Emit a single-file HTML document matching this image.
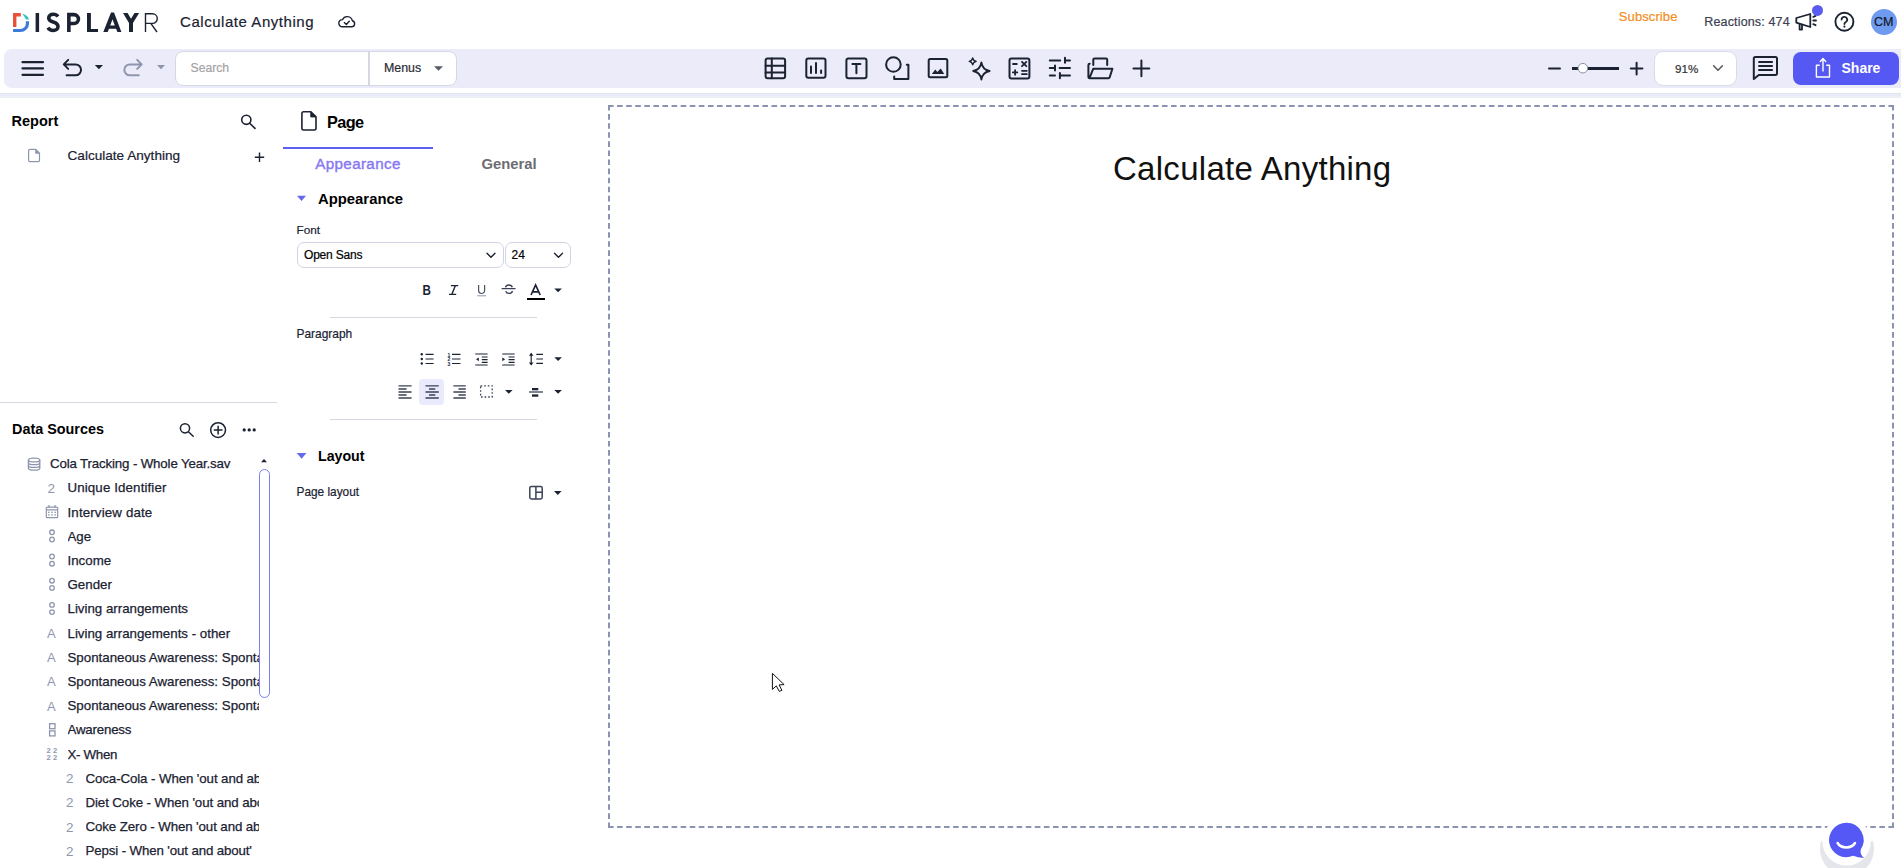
<!DOCTYPE html>
<html><head><meta charset="utf-8">
<style>
*{box-sizing:border-box;margin:0;padding:0}
html,body{width:1901px;height:868px;overflow:hidden;background:#fff;font-family:"Liberation Sans",sans-serif;color:#1b2232;position:relative}
.t{position:absolute;white-space:nowrap;line-height:1}
.b{position:absolute}
.ds{font-size:13.3px;color:#1b2232;overflow:hidden;height:16px;-webkit-text-stroke:0.25px #1b2232}
svg.ov{position:absolute;left:0;top:0;width:1901px;height:868px;overflow:visible;font-family:"Liberation Sans",sans-serif}
</style></head><body>
<div class="b" style="left:4px;top:49px;width:1897px;height:39px;background:#ebebfa;border-radius:8px 0 0 8px"></div>
<div class="b" style="left:0px;top:93px;width:1901px;height:1px;background:#e3e4eb"></div>
<div class="b" style="left:0px;top:94px;width:1901px;height:2px;background:#e9eafa"></div>
<div class="b" style="left:0px;top:96px;width:1901px;height:2px;background:#eceff3"></div>
<div class="b" style="left:175px;top:51px;width:282px;height:35px;background:#fff;border:1px solid #d5d8e3;border-radius:8px"></div>
<div class="b" style="left:368px;top:52px;width:2px;height:33px;background:#d5d8e3"></div>
<div class="b" style="left:1654px;top:51px;width:83px;height:35px;background:#fff;border:1px solid #d9dce6;border-radius:9px"></div>
<div class="b" style="left:1793px;top:52px;width:106px;height:33px;background:#5558f2;border-radius:8px"></div>
<div class="b" style="left:1870.5px;top:8.5px;width:26.5px;height:26.5px;background:#6e9af0;border-radius:50%"></div>
<div class="b" style="left:0px;top:402px;width:277px;height:1px;background:#d5d8e0"></div>
<div class="b" style="left:283px;top:147px;width:150px;height:2px;background:#5b5fef"></div>
<div class="b" style="left:297px;top:242px;width:207px;height:26px;border:1px solid #d0d4e4;border-radius:7px"></div>
<div class="b" style="left:505px;top:242px;width:66px;height:26px;border:1px solid #d0d4e4;border-radius:7px"></div>
<div class="b" style="left:330px;top:317px;width:207px;height:1px;background:#d5d8e0"></div>
<div class="b" style="left:419px;top:379px;width:25px;height:26px;background:#e9eafc;border-radius:4px"></div>
<div class="b" style="left:330px;top:419px;width:207px;height:1px;background:#d5d8e0"></div>
<div class="b" style="left:259px;top:469px;width:11px;height:229px;border:1px solid #7b7ff0;border-radius:6px"></div>
<div class="t" style="left:180px;top:14.10px;font-size:15px;color:#1b2232;-webkit-text-stroke:0.2px #1b2232;letter-spacing:0.55px;">Calculate Anything</div>
<div class="t" style="left:1618.8px;top:9.90px;font-size:13px;color:#f58d1d;-webkit-text-stroke:0.2px #f58d1d;letter-spacing:0.1px;">Subscribe</div>
<div class="t" style="left:1704.3px;top:16.32px;font-size:12.5px;color:#3b4150;-webkit-text-stroke:0.2px #3b4150;letter-spacing:0.15px;">Reactions: 474</div>
<div class="t" style="left:1874px;top:16.42px;font-size:12.5px;color:#141826;-webkit-text-stroke:0.2px #141826;">CM</div>
<div class="t" style="left:190.5px;top:62.37px;font-size:12.2px;color:#a3a3a6;-webkit-text-stroke:0.2px #a3a3a6;">Search</div>
<div class="t" style="left:384px;top:62.20px;font-size:12.4px;color:#2a2d35;-webkit-text-stroke:0.2px #2a2d35;">Menus</div>
<div class="t" style="left:1675px;top:63.18px;font-size:11.6px;color:#333;-webkit-text-stroke:0.2px #333;">91%</div>
<div class="t" style="left:1841.5px;top:60.65px;font-size:14px;color:#fff;font-weight:700;">Share</div>
<div class="t" style="left:11.5px;top:113.73px;font-size:14.5px;color:#000;font-weight:700;">Report</div>
<div class="t" style="left:67.5px;top:149.49px;font-size:13.6px;color:#1b2232;-webkit-text-stroke:0.2px #1b2232;">Calculate Anything</div>
<div class="t" style="left:12px;top:421.71px;font-size:14.4px;color:#000;font-weight:700;">Data Sources</div>
<div class="t" style="left:327px;top:113.60px;font-size:16.3px;color:#000;font-weight:700;letter-spacing:-0.6px;">Page</div>
<div class="t" style="left:315.3px;top:156.33px;font-size:15.2px;color:#8679f0;-webkit-text-stroke:0.4px #8679f0;letter-spacing:0.35px;">Appearance</div>
<div class="t" style="left:481.5px;top:156.67px;font-size:14.8px;color:#6c6d73;font-weight:700;">General</div>
<div class="t" style="left:318px;top:191.63px;font-size:14.85px;color:#000;font-weight:700;">Appearance</div>
<div class="t" style="left:296.5px;top:224.81px;font-size:11.8px;color:#1b2232;-webkit-text-stroke:0.2px #1b2232;">Font</div>
<div class="t" style="left:304px;top:249.44px;font-size:12px;color:#000;-webkit-text-stroke:0.2px #000;letter-spacing:-0.2px;">Open Sans</div>
<div class="t" style="left:511.5px;top:249.44px;font-size:12px;color:#000;-webkit-text-stroke:0.2px #000;">24</div>
<div class="t" style="left:296.5px;top:329.08px;font-size:11.95px;color:#1b2232;-webkit-text-stroke:0.2px #1b2232;">Paragraph</div>
<div class="t" style="left:318px;top:448.98px;font-size:14.2px;color:#000;font-weight:700;">Layout</div>
<div class="t" style="left:296.5px;top:487.37px;font-size:11.85px;color:#1b2232;-webkit-text-stroke:0.2px #1b2232;">Page layout</div>
<div class="t" style="left:1113px;top:152.07px;font-size:33px;color:#111;letter-spacing:0.28px;">Calculate Anything</div>
<div class="t ds" style="left:50px;top:457.24px;width:209px;letter-spacing:-0.15px">Cola Tracking - Whole Year.sav</div>
<div class="t ds" style="left:67.5px;top:481.44px;width:191.5px;letter-spacing:0.13px">Unique Identifier</div>
<div class="t ds" style="left:67.5px;top:505.64px;width:191.5px;letter-spacing:0.15px">Interview date</div>
<div class="t ds" style="left:67.5px;top:529.84px;width:191.5px;letter-spacing:0px">Age</div>
<div class="t ds" style="left:67.5px;top:554.04px;width:191.5px;letter-spacing:0px">Income</div>
<div class="t ds" style="left:67.5px;top:578.24px;width:191.5px;letter-spacing:0px">Gender</div>
<div class="t ds" style="left:67.5px;top:602.44px;width:191.5px;letter-spacing:0px">Living arrangements</div>
<div class="t ds" style="left:67.5px;top:626.64px;width:191.5px;letter-spacing:0px">Living arrangements - other</div>
<div class="t ds" style="left:67.5px;top:650.84px;width:191.5px;letter-spacing:0px">Spontaneous Awareness: Spontaneous Awareness - 1</div>
<div class="t ds" style="left:67.5px;top:675.04px;width:191.5px;letter-spacing:0px">Spontaneous Awareness: Spontaneous Awareness - 2</div>
<div class="t ds" style="left:67.5px;top:699.24px;width:191.5px;letter-spacing:0px">Spontaneous Awareness: Spontaneous Awareness - 3</div>
<div class="t ds" style="left:67.5px;top:723.44px;width:191.5px;letter-spacing:-0.2px">Awareness</div>
<div class="t ds" style="left:67.5px;top:747.64px;width:191.5px;letter-spacing:-0.3px">X- When</div>
<div class="t ds" style="left:85.5px;top:771.84px;width:173.5px;letter-spacing:-0.1px">Coca-Cola - When 'out and about'</div>
<div class="t ds" style="left:85.5px;top:796.04px;width:173.5px;letter-spacing:-0.1px">Diet Coke - When 'out and about'</div>
<div class="t ds" style="left:85.5px;top:820.24px;width:173.5px;letter-spacing:-0.1px">Coke Zero - When 'out and about'</div>
<div class="t ds" style="left:85.5px;top:844.44px;width:173.5px;letter-spacing:-0.13px">Pepsi - When 'out and about'</div>
<svg class="ov" width="1901" height="868" viewBox="0 0 1901 868">
<g fill="none" stroke="#8e96ad" stroke-width="1.3"><ellipse cx="34.1" cy="460.0" rx="5.7" ry="1.9"/><path d="M28.4 460.0 V468.20000000000005 A5.7 1.9 0 0 0 39.8 468.20000000000005 V460.0 M28.4 462.8 A5.7 1.9 0 0 0 39.8 462.8 M28.4 465.5 A5.7 1.9 0 0 0 39.8 465.5"/></g>
<text x="47.5" y="492.7" font-size="13.5" fill="#8e96ad">2</text>
<g fill="none" stroke="#8e96ad" stroke-width="1.2"><rect x="46.3" y="507.09999999999997" width="11.4" height="10.6" rx="1"/><path d="M46.3 509.9 H57.7 M49 505.09999999999997 V507.7 M55 505.09999999999997 V507.7"/></g><g fill="#8e96ad"><rect x="48" y="511.7" width="1.6" height="1.2"/><rect x="51.2" y="511.7" width="1.6" height="1.2"/><rect x="54.4" y="511.7" width="1.6" height="1.2"/><rect x="48" y="514.3" width="1.6" height="1.2"/><rect x="51.2" y="514.3" width="1.6" height="1.2"/><rect x="54.4" y="514.3" width="1.6" height="1.2"/></g>
<circle cx="52" cy="532.3000000000001" r="2.3" fill="none" stroke="#8e96ad" stroke-width="1.3"/>
<circle cx="52" cy="539.5" r="2.3" fill="none" stroke="#8e96ad" stroke-width="1.3"/>
<circle cx="52" cy="556.5" r="2.3" fill="none" stroke="#8e96ad" stroke-width="1.3"/>
<circle cx="52" cy="563.6999999999999" r="2.3" fill="none" stroke="#8e96ad" stroke-width="1.3"/>
<circle cx="52" cy="580.7" r="2.3" fill="none" stroke="#8e96ad" stroke-width="1.3"/>
<circle cx="52" cy="587.9" r="2.3" fill="none" stroke="#8e96ad" stroke-width="1.3"/>
<circle cx="52" cy="604.9000000000001" r="2.3" fill="none" stroke="#8e96ad" stroke-width="1.3"/>
<circle cx="52" cy="612.1" r="2.3" fill="none" stroke="#8e96ad" stroke-width="1.3"/>
<text x="47" y="637.9" font-size="13" fill="#8e96ad">A</text>
<text x="47" y="662.1" font-size="13" fill="#8e96ad">A</text>
<text x="47" y="686.3" font-size="13" fill="#8e96ad">A</text>
<text x="47" y="710.5" font-size="13" fill="#8e96ad">A</text>
<g fill="none" stroke="#8e96ad" stroke-width="1.3"><rect x="49.6" y="723.7" width="5.4" height="5"/><rect x="49.6" y="730.9000000000001" width="5.4" height="5"/></g>
<g font-size="7.6" font-weight="700" fill="#8e96ad"><text x="46.6" y="753.1">2</text><text x="52.9" y="753.1">2</text><text x="46.6" y="760.1">2</text><text x="52.9" y="760.1">2</text></g>
<text x="66.0" y="783.0999999999999" font-size="13.5" fill="#8e96ad">2</text>
<text x="66.0" y="807.3" font-size="13.5" fill="#8e96ad">2</text>
<text x="66.0" y="831.5" font-size="13.5" fill="#8e96ad">2</text>
<text x="66.0" y="855.7" font-size="13.5" fill="#8e96ad">2</text>
<path d="M13.05 13.05 H20.8 V16.6 H16.4 V26.9 H13.05 Z" fill="#e8503a"/>
<path d="M22.1 13.6 Q27.6 15 29.1 19.5 H25.9 Q24.6 16.6 22.1 13.6 Z" fill="#3ec1c1"/>
<g stroke="#8a94b0" stroke-width="2" fill="none"><path d="M608 106 H1894" stroke-dasharray="5.6 3.481"/><path d="M608 827 H1894" stroke-dasharray="5.6 3.481"/><path d="M609 105 V828" stroke-dasharray="5.6 3.481"/><path d="M1893 105 V828" stroke-dasharray="5.6 3.481"/></g>
<path d="M27.45 21.3 V23.5 A7 7 0 0 1 20.45 30.5 H13.05" fill="none" stroke="#3d7bd9" stroke-width="3.2"/>
<g fill="#1b2232"><rect x="35.6" y="13" width="3.5" height="19"/><path d="M87 13 H90.9 V29 H98 V32 H87 Z"/><path fill-rule="evenodd" d="M103.3 32 L111 12.6 H114 L121.4 32 H117.4 L116.1 28.8 H109 L107.6 32 Z M110.2 25.4 H114.8 L112.5 19.3 Z"/><path d="M123 13 H127.6 L131 18.8 L134.5 13 H139.1 L133 22.9 V32 H129 V22.9 Z"/></g>
<g fill="none" stroke="#1b2232" stroke-width="3.6"><path d="M58 16.5 C56.6 14.6 54.6 14.3 53.2 14.3 C50.5 14.3 48.7 15.8 48.7 18 C48.7 20.3 50.6 21.2 53.2 22 C56.2 22.9 58 24 58 26.5 C58 29 56 30.5 53.2 30.5 C50.9 30.5 49.1 29.6 48 27.6"/><path d="M68.85 32 V14.6 H74 A4.45 4.45 0 0 1 74 23.5 H68.85"/></g>
<path d="M145.5 32 V13.8 H152.5 A4.8 4.8 0 0 1 152.5 23.4 H145.5 M150.8 23.4 L157 32" fill="none" stroke="#1b2232" stroke-width="1.4"/>
<g fill="none" stroke="#1b2232" stroke-width="1.4" stroke-linejoin="round" stroke-linecap="round"><path d="M342.3 26.8 H351.6 A3.1 3.1 0 0 0 352.3 20.7 A5.2 5.2 0 0 0 342.5 19.6 A3.6 3.6 0 0 0 342.3 26.8 Z"/><path d="M344.3 22.6 L346.3 24.4 L349.3 21.2"/></g>
<g fill="none" stroke="#1b2232" stroke-width="1.8" stroke-linejoin="round" stroke-linecap="round"><path d="M1796.3 18 L1810.3 14 V27 L1796.3 22.6 Z"/><path d="M1799.6 23.8 V29.6 H1802 V24.6"/><path d="M1813.3 16.8 L1815.6 15.8 M1813.3 20.5 H1816 M1813.3 24.2 L1815.6 25.2"/></g>
<circle cx="1817.5" cy="10.4" r="5.5" fill="#5a5cf0"/>
<circle cx="1844.4" cy="21.8" r="9" fill="none" stroke="#1b2232" stroke-width="1.9"/><path d="M1841.6 19.6 A2.8 2.8 0 1 1 1845.6 22.2 Q1844.4 22.8 1844.4 24" fill="none" stroke="#1b2232" stroke-width="1.8" stroke-linecap="round"/><circle cx="1844.4" cy="26.6" r="1.1" fill="#1b2232"/>
<g stroke="#1b2232" stroke-width="2.2" stroke-linecap="round"><path d="M22.5 62.2 H43 M22.5 68.4 H43 M22.5 74.8 H43"/></g>
<path d="M68.2 59.9 L63.8 64.4 L68.2 68.9 M63.8 64.4 H75.6 A5.45 5.45 0 0 1 75.6 75.3 H66.6" fill="none" stroke="#1b2232" stroke-width="2" stroke-linecap="round" stroke-linejoin="round"/>
<path d="M94.8 65 H103 L98.9 69.3 Z" fill="#1b2232"/>
<path d="M137.2 59.9 L141.6 64.4 L137.2 68.9 M141.6 64.4 H129.8 A5.45 5.45 0 0 0 129.8 75.3 H138.8" fill="none" stroke="#8e96ad" stroke-width="2" stroke-linecap="round" stroke-linejoin="round"/>
<path d="M157 65 H165 L161 69.3 Z" fill="#8e96ad"/>
<path d="M434 66.2 H443 L438.5 70.7 Z" fill="#555a66"/>
<g fill="none" stroke="#1b2232" stroke-width="2" stroke-linecap="round" stroke-linejoin="round"><rect x="765.6" y="58.6" width="19.5" height="19.6" rx="2"/><path d="M771.8 58.6 V78.2 M765.6 65.8 H785.1 M765.6 72.4 H785.1"/><rect x="806.3" y="58.6" width="19.2" height="19.1" rx="2"/><path d="M811 66.6 V73 M816 63 V73 M821.1 70.4 V73"/><rect x="846.4" y="58.6" width="20.1" height="19.6" rx="2"/><path d="M852.4 64.1 H860.4 M856.4 64.1 V73.2"/><circle cx="893.4" cy="64.5" r="7.3"/><path d="M894.2 76.6 V79 H908.4 V64.8 H906.8"/><rect x="928.7" y="59" width="18.6" height="18.2" rx="1.5"/><rect x="1009.5" y="58.6" width="19.9" height="19.9" rx="2"/><path d="M1049.8 60.4 H1060.2 M1065 60.4 H1070 M1065 57.8 V62.8 M1049.8 68 H1055 M1055 65.6 V70.4 M1059.6 68 H1070 M1049.8 75.6 H1055 M1059.9 72.9 V78.2 M1059.9 75.6 H1070"/><path d="M1093.3 65 V59.5 Q1093.3 58.4 1094.5 58.4 H1106 Q1107.2 58.4 1107.2 59.5 V65"/><path d="M1089.7 63.8 Q1088.4 63.8 1088.4 65 V77 Q1088.4 78.3 1089.7 78.3 H1108.5 Q1109.4 78.3 1109.7 77.3 L1112.4 68.8 H1093.2 L1089.5 78"/><path d="M1133.5 68.4 H1149.3 M1141.4 60.5 V76.3"/></g>
<path d="M931.9 73.9 L935.2 69.6 L937.4 72 L940.7 68.6 L944.2 73.9 Z" fill="#1b2232"/>
<path d="M981.4 62.5 Q982.6 69.8 989.6 71 Q982.6 72.2 981.4 79.5 Q980.2 72.2 973.2 71 Q980.2 69.8 981.4 62.5 Z" fill="none" stroke="#1b2232" stroke-width="1.8" stroke-linejoin="round"/>
<path d="M972.7 58 Q973.3 60.8 976.2 61.4 Q973.3 62 972.7 64.9 Q972.1 62 969.2 61.4 Q972.1 60.8 972.7 58 Z" fill="none" stroke="#1b2232" stroke-width="1.3" stroke-linejoin="round"/>
<g stroke="#1b2232" stroke-width="1.8" stroke-linecap="round"><path d="M1013 64 H1016.8 M1022 61.9 L1026.3 66.2 M1026.3 61.9 L1022 66.2 M1012.9 72.4 H1017.3 M1015.1 70.2 V74.8 M1022 70.8 H1026.8 M1022 74.2 H1026.8"/></g>
<g stroke="#1b2232" stroke-linecap="round"><path d="M1549 68.5 H1560" stroke-width="2"/><path d="M1630.8 68.6 H1642.4 M1636.6 62.8 V74.4" stroke-width="2"/></g>
<path d="M1572 68.5 H1619" stroke="#1b2232" stroke-width="3.2"/>
<circle cx="1582.9" cy="68.2" r="4.8" fill="#fff" stroke="#8890a8" stroke-width="1"/>
<path d="M1713.6 65.8 L1718 70.2 L1722.4 65.8" fill="none" stroke="#555" stroke-width="1.5" stroke-linecap="round" stroke-linejoin="round"/>
<path d="M1755.4 56.9 H1775.4 Q1777 56.9 1777 58.5 V73.3 Q1777 74.9 1775.4 74.9 H1758.8 L1753.8 79 V58.5 Q1753.8 56.9 1755.4 56.9 Z" fill="none" stroke="#1b2232" stroke-width="2" stroke-linejoin="round"/>
<path d="M1758.3 62 H1772.8 M1758.3 66 H1772.8 M1758.3 70 H1772.8" stroke="#1b2232" stroke-width="2"/>
<g fill="none" stroke="#fff" stroke-width="1.4" stroke-linecap="round" stroke-linejoin="round"><path d="M1819.2 65.2 H1816.4 V77 H1829.5 V65.2 H1826.7"/><path d="M1823 71 V58.8 M1820.3 61.4 L1823 58.6 L1825.7 61.4"/></g>
<g fill="none" stroke="#1b2232" stroke-width="1.6" stroke-linecap="round"><circle cx="246.3" cy="119.8" r="4.6"/><path d="M249.7 123.2 L255 128.4"/></g>
<path d="M35.8 149.4 L39.5 153.1 H35.8 Z" fill="#8e96ad"/>
<path d="M35.8 149.4 H29.9 Q28.6 149.4 28.6 150.7 V160.3 Q28.6 161.6 29.9 161.6 H38.2 Q39.5 161.6 39.5 160.3 V153.1 Z M35.8 149.4 V153.1 H39.5" fill="none" stroke="#8e96ad" stroke-width="1.2" stroke-linejoin="round"/>
<path d="M254.8 157.2 H264.2 M259.5 152.5 V161.9" stroke="#1b2232" stroke-width="1.4"/>
<g fill="none" stroke="#1b2232" stroke-width="1.5" stroke-linecap="round"><circle cx="185" cy="428.3" r="4.6"/><path d="M188.4 431.7 L193.2 436.3"/><circle cx="218.1" cy="430.1" r="7.4"/><path d="M214.3 430.1 H221.9 M218.1 426.3 V433.9"/></g>
<g fill="#1b2232"><circle cx="244.2" cy="429.9" r="1.65"/><circle cx="249.2" cy="429.9" r="1.65"/><circle cx="254.2" cy="429.9" r="1.65"/><path d="M261 462.3 H267 L264 459 Z"/></g>
<path d="M310.8 111.7 H303.6 Q301.9 111.7 301.9 113.4 V128.3 Q301.9 130 303.6 130 H314.3 Q316 130 316 128.3 V116.9 Z" fill="none" stroke="#1b2232" stroke-width="1.6" stroke-linejoin="round"/>
<path d="M310.8 111.7 L316 116.9 H310.8 Z" fill="#1b2232" stroke="#1b2232" stroke-width="1" stroke-linejoin="round"/>
<path d="M297 195.8 H306 L301.5 201 Z M296.7 453 H306.5 L301.6 458.8 Z" fill="#6668ee"/>
<path d="M487 253.3 L491 257.3 L495 253.3 M554.5 253.3 L558.5 257.3 L562.5 253.3" fill="none" stroke="#1b2232" stroke-width="1.4" stroke-linecap="round" stroke-linejoin="round"/>
<text x="422.4" y="294.9" font-size="14" font-weight="700" fill="#1b2232" textLength="8.4" lengthAdjust="spacingAndGlyphs">B</text>
<path d="M450.9 285.6 H458.2 M449 294.4 H456.2 M455.4 285.6 L451.8 294.4" fill="none" stroke="#1b2232" stroke-width="1.4"/>
<path d="M478.6 285 V290.5 A3 3 0 0 0 484.6 290.5 V285" fill="none" stroke="#4a5164" stroke-width="1.2"/>
<path d="M477.2 295.8 H486" stroke="#8e96ad" stroke-width="1"/>
<path d="M512.3 287.2 A3.5 3 0 0 0 505.5 287.4 M505.7 291.2 A3.5 3 0 0 0 512.5 291 M501.6 288.7 H515.5" fill="none" stroke="#3b4256" stroke-width="1.3"/>
<path d="M531 295 L535.6 285 L540.2 295 M532.6 291.8 H538.6" fill="none" stroke="#1b2232" stroke-width="1.7"/>
<path d="M527 299 H545" stroke="#000" stroke-width="2"/>
<path d="M554.3 288.4 H561.9 L558.0999999999999 292.2 Z M554.3 357.2 H561.9 L558.0999999999999 361.0 Z M505 390 H512.6 L508.8 393.8 Z M554.3 390 H561.9 L558.0999999999999 393.8 Z M554 491.1 H561.6 L557.8 494.90000000000003 Z " fill="#1b2232"/>
<g stroke="#1b2232" stroke-width="1.2" fill="none"><path d="M425.5 354.3 H433.6 M425.5 359 H433.6 M425.5 363.5 H433.6"/><path d="M452 354.3 H460.5 M452 359 H460.5 M452 363.5 H460.5"/><path d="M475.3 354 H487.6 M481.8 357 H487.6 M481.8 359.6 H487.6 M481.8 362.3 H487.6 M475.3 365 H487.6"/><path d="M502.2 354 H514.6 M508.6 357 H514.6 M508.6 359.6 H514.6 M508.6 362.3 H514.6 M502.2 365 H514.6"/><path d="M536.3 354.4 H543 M536.3 359 H543 M536.3 363.3 H543 M531.2 353.5 V364.8"/></g>
<g fill="#1b2232"><circle cx="421.8" cy="354.2" r="1.2"/><circle cx="421.8" cy="359" r="1.2"/><circle cx="421.8" cy="363.5" r="1.2"/><path d="M478.8 357.4 V361.2 L476 359.3 Z M502.3 357.4 V361.2 L505.1 359.3 Z M528.9 355.7 L531.2 352.8 L533.5 355.7 Z M528.9 362.6 L531.2 365.5 L533.5 362.6 Z"/></g>
<g font-size="5" font-weight="700" fill="#1b2232"><text x="447.6" y="357">1</text><text x="447.6" y="361.4">2</text><text x="447.6" y="366">3</text></g>
<g stroke="#3b4256" stroke-width="1.3" fill="none"><path d="M398.5 385.9 H411.6 M398.5 389 H406.6 M398.5 392 H411.6 M398.5 395 H406.6 M398.5 398 H411.6"/><path d="M425.5 385.9 H438.8 M429 389 H435.3 M425.5 392 H438.8 M429 395 H435.3 M425.5 398 H438.8"/><path d="M453.4 385.9 H465.8 M458.5 389 H465.8 M453.4 392 H465.8 M458.5 395 H465.8 M453.4 398 H465.8"/><path d="M480.6 385.8 H492.2 V397 H480.6 Z" stroke-dasharray="1.6 2"/><path d="M529 392 H543"/></g>
<g fill="#1b2232"><rect x="532" y="388" width="6.3" height="2.3"/><rect x="532" y="394.4" width="6.3" height="2.3"/></g>
<g fill="none" stroke="#3b4256" stroke-width="1.5"><rect x="529.8" y="486.5" width="12.4" height="12.4" rx="1.6"/><path d="M535.9 486.5 V498.9 M535.9 492.3 H542.2"/></g>
<path d="M772.4 673.3 V689.4 L776.3 685.9 L779.3 691.4 L781.9 690.3 L779.1 684.9 L784.1 684.6 Z" fill="#fff" stroke="#111" stroke-width="1" stroke-linejoin="round"/>
<defs><clipPath id="cb"><rect x="1800" y="841" width="101" height="40"/></clipPath></defs>
<circle cx="1847" cy="849" r="27" fill="#e5e6eb" clip-path="url(#cb)"/>
<circle cx="1846.6" cy="841.4" r="24.2" fill="#fff"/>
<path d="M1846.2 822.8 A17.2 17.2 0 1 0 1853 855.8 Q1858 857.6 1864 858 Q1859.6 854 1860.8 849.4 A17.2 17.2 0 0 0 1846.2 822.8 Z" fill="#5558f4"/>
<path d="M1837.6 843 A9.6 7.6 0 0 0 1855 843" fill="none" stroke="#fff" stroke-width="2.5" stroke-linecap="round"/>
</svg>
</body></html>
